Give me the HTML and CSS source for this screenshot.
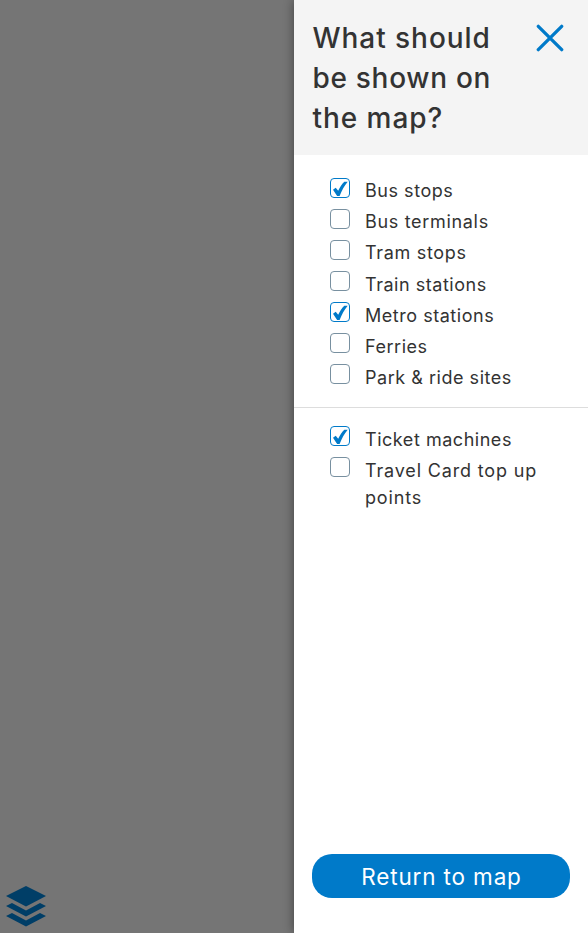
FILE: index.html
```html
<!DOCTYPE html>
<html lang="en">
<head>
<meta charset="utf-8">
<title>Map layers</title>
<link rel="stylesheet" href="styles.css">
</head>
<body>
<div class="map">
  <svg class="layers" width="40" height="41" viewBox="0 0 40 41" fill="#003e67">
    <path d="M20 0 40 10 20 20.500 0 10Z"/>
    <path d="M0 20 6 17 20 24.500 34 17 40 20 20 30.500Z"/>
    <path d="M0 30 6 27 20 34.500 34 27 40 30 20 40.500Z"/>
  </svg>
</div>
<aside class="panel">
  <header class="head">
    <h1 class="title"><span class="wide">What should</span><br>be shown on<br><span class="wide">the map?</span></h1>
    <svg class="close" width="28" height="28" viewBox="0 0 28 28" fill="none" stroke="#007ac9" stroke-width="3.300" stroke-linecap="round"><path d="M2.300 2.300 25.700 25.700M25.700 2.300 2.300 25.700"/></svg>
  </header>
  <ul class="group">
    <li class="row"><span class="box on"><svg width="20" height="20" viewBox="0 0 20 20"><path d="M3 11.800 5.700 9.800 8.200 12.800C9.800 9.200 12 5.700 14.300 3.700L17.700 3.700C14.200 7.700 11.900 12.400 9.600 17.900L7.100 17.900Z"/></svg></span><span class="label">Bus stops</span></li>
    <li class="row"><span class="box"></span><span class="label wide">Bus terminals</span></li>
    <li class="row"><span class="box"></span><span class="label wide">Tram stops</span></li>
    <li class="row"><span class="box"></span><span class="label">Train stations</span></li>
    <li class="row"><span class="box on"><svg width="20" height="20" viewBox="0 0 20 20"><path d="M3 11.800 5.700 9.800 8.200 12.800C9.800 9.200 12 5.700 14.300 3.700L17.700 3.700C14.200 7.700 11.900 12.400 9.600 17.900L7.100 17.900Z"/></svg></span><span class="label">Metro stations</span></li>
    <li class="row"><span class="box"></span><span class="label">Ferries</span></li>
    <li class="row"><span class="box"></span><span class="label">Park &amp; ride sites</span></li>
  </ul>
  <ul class="group">
    <li class="row"><span class="box on"><svg width="20" height="20" viewBox="0 0 20 20"><path d="M3 11.800 5.700 9.800 8.200 12.800C9.800 9.200 12 5.700 14.300 3.700L17.700 3.700C14.200 7.700 11.900 12.400 9.600 17.900L7.100 17.900Z"/></svg></span><span class="label">Ticket machines</span></li>
    <li class="row"><span class="box"></span><span class="label wider">Travel Card top up<br>points</span></li>
  </ul>
  <button class="return">Return to map</button>
</aside>
</body>
</html>
```

FILE: styles.css
```css
* { box-sizing: border-box; }
body {
  margin: 0;
  height: 933px;
  display: flex;
  overflow: hidden;
  font-family: Inter, "Liberation Sans", sans-serif;
  color: #333;
}
.map {
  width: 294px;
  background: #757575;
  display: flex;
  align-items: flex-end;
  padding: 0 0 6px 6px;
}
.layers { display: block; }
.panel {
  width: 294px;
  background: #fff;
  display: flex;
  flex-direction: column;
  box-shadow: 0 0 10px rgba(0, 0, 0, .45);
}
.head {
  height: 155px;
  background: #f4f4f4;
  padding: 18px 24px 0 18.500px;
  display: flex;
  justify-content: space-between;
}
.title {
  margin: 0;
  font-size: 28px;
  font-weight: 500;
  line-height: 40px;
  letter-spacing: .7px;
  white-space: nowrap;
}
.title .wide { letter-spacing: .95px; }
.close { margin-top: 6px; flex: none; }
.group {
  list-style: none;
  margin: 0;
  padding: 22.050px 0 12px 36px;
}
.group + .group {
  border-top: 1px solid #ddd;
  padding-top: 18px;
}
.row {
  display: flex;
  gap: 15px;
  padding-bottom: 4.160px;
}
.box {
  flex: none;
  width: 20px;
  height: 20px;
  margin-top: .47px;
  border: 1px solid #7890a0;
  border-radius: 4px;
}
.group + .group .box { margin-top: 0; }
.box.on { border-color: #007ac9; }
.box svg { display: block; margin: -1px; fill: #007ac9; }
.label {
  font-size: 18px;
  line-height: 27px;
  letter-spacing: .53px;
  white-space: nowrap;
}
.label.wide { letter-spacing: .68px; }
.label.wider { letter-spacing: .84px; }
.return {
  margin: auto 18px 35px;
  height: 44px;
  padding: 0 0 0 1px;
  border: 0;
  border-radius: 20px;
  background: #007ac9;
  color: #fff;
  font: 400 22.500px Inter, "Liberation Sans", sans-serif;
  letter-spacing: .85px;
}
```
